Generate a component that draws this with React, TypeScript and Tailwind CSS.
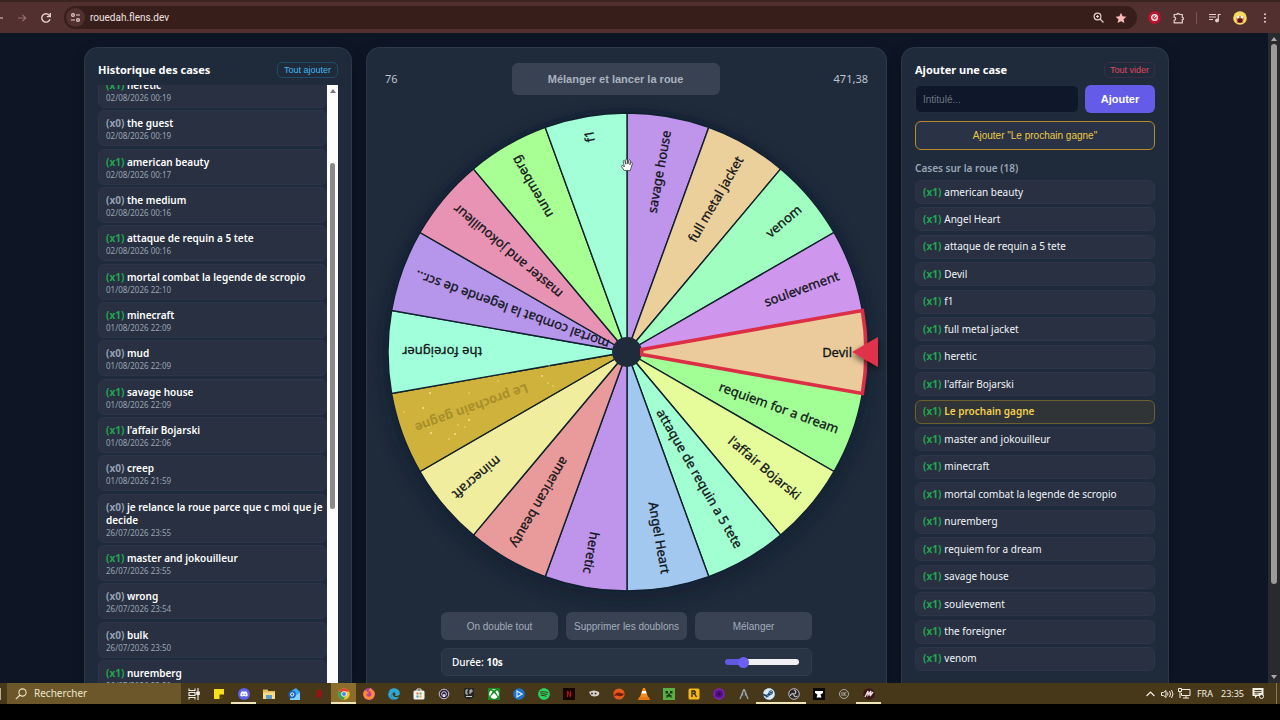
import React from "react";
import { FaDiscord, FaSpotify, FaXbox, FaFirefoxBrowser, FaEdge, FaSteam } from "react-icons/fa";

type HistoryItem = { count: number; name: string; date: string };

const HISTORY: HistoryItem[] = [
  { count: 1, name: "heretic", date: "02/08/2026 00:19" },
  { count: 0, name: "the guest", date: "02/08/2026 00:19" },
  { count: 1, name: "american beauty", date: "02/08/2026 00:17" },
  { count: 0, name: "the medium", date: "02/08/2026 00:16" },
  { count: 1, name: "attaque de requin a 5 tete", date: "02/08/2026 00:16" },
  { count: 1, name: "mortal combat la legende de scropio", date: "01/08/2026 22:10" },
  { count: 1, name: "minecraft", date: "01/08/2026 22:09" },
  { count: 0, name: "mud", date: "01/08/2026 22:09" },
  { count: 1, name: "savage house", date: "01/08/2026 22:09" },
  { count: 1, name: "l'affair Bojarski", date: "01/08/2026 22:06" },
  { count: 0, name: "creep", date: "01/08/2026 21:59" },
  { count: 0, name: "je relance la roue parce que c moi que je decide", date: "26/07/2026 23:55" },
  { count: 1, name: "master and jokouilleur", date: "26/07/2026 23:55" },
  { count: 0, name: "wrong", date: "26/07/2026 23:54" },
  { count: 0, name: "bulk", date: "26/07/2026 23:50" },
  { count: 1, name: "nuremberg", date: "26/07/2026 23:50" },
];

const ENTRIES = [
  "american beauty",
  "Angel Heart",
  "attaque de requin a 5 tete",
  "Devil",
  "f1",
  "full metal jacket",
  "heretic",
  "l'affair Bojarski",
  "Le prochain gagne",
  "master and jokouilleur",
  "minecraft",
  "mortal combat la legende de scropio",
  "nuremberg",
  "requiem for a dream",
  "savage house",
  "soulevement",
  "the foreigner",
  "venom",
];

const SPECIAL = "Le prochain gagne";

const SLICES: { label: string; color: string }[] = [
  { label: "savage house", color: "#bf94eb" },
  { label: "full metal jacket", color: "#ecd09c" },
  { label: "venom", color: "#a0ffc0" },
  { label: "soulevement", color: "#cf96ee" },
  { label: "Devil", color: "#ebcb9b" },
  { label: "requiem for a dream", color: "#a2ff96" },
  { label: "l'affair Bojarski", color: "#e6fb9a" },
  { label: "attaque de requin a 5 tete", color: "#a2ffd2" },
  { label: "Angel Heart", color: "#a2c8f0" },
  { label: "heretic", color: "#bf94eb" },
  { label: "american beauty", color: "#e99a9a" },
  { label: "minecraft", color: "#f0ee9e" },
  { label: SPECIAL, color: "#cfb23c" },
  { label: "the foreigner", color: "#a2ffdc" },
  { label: "mortal combat la legende de scr...", color: "#b696ea" },
  { label: "master and jokouilleur", color: "#e893b3" },
  { label: "nuremberg", color: "#a8ff94" },
  { label: "f1", color: "#a2ffd8" },
];

const SPARKS = [
  [61, 291], [100, 291], [129, 279], [173, 274], [179, 281], [184, 284], [62, 331], [59, 325], [80, 337], [86, 332], [89, 323], [96, 325], [54, 306], [180, 264], [35, 310], [100, 318],
];

const R = 239;

function point(angle: number, radius: number) {
  const rad = ((angle - 90) * Math.PI) / 180;
  return `${(250 + radius * Math.cos(rad)).toFixed(2)} ${(250 + radius * Math.sin(rad)).toFixed(2)}`;
}

function slicePath(i: number) {
  return `M250 250L${point(i * 20, R)}A${R} ${R} 0 0 1 ${point(i * 20 + 20, R)}Z`;
}

function Wheel() {
  return (
    <svg viewBox="0 0 500 500" className="mt-[7px] w-full max-w-[500px] shrink-0 overflow-visible" role="img" aria-label="Roue">
      <defs>
        <filter id="wheelShadow" x="-20%" y="-20%" width="140%" height="140%">
          <feGaussianBlur stdDeviation="9" />
        </filter>
        <filter id="pinShadow" x="-50%" y="-50%" width="200%" height="200%">
          <feDropShadow dx="0" dy="3" stdDeviation="3" floodColor="#000" floodOpacity="0.6" />
        </filter>
      </defs>
      <circle cx="250" cy="256" r="242" fill="#0b1322" opacity="0.5" filter="url(#wheelShadow)" />
      <circle cx="250" cy="250" r="244" fill="#172337" />
      {SLICES.map((s, i) => (
        <path key={s.label} d={slicePath(i)} fill={s.color} stroke="#10202c" strokeWidth="1.4" />
      ))}
      {SPARKS.map(([x, y], i) => (
        <circle key={i} cx={x - 8} cy={y} r={i % 3 === 0 ? 1 : 0.7} fill="#f6e08a" />
      ))}
      <circle cx="250" cy="250" r="15" fill="#1f2b3b" />
      <path d={`M${point(80, 15)}L${point(80, R)}A${R} ${R} 0 0 1 ${point(100, R)}L${point(100, 15)}Z`} fill="#ebcb9b" stroke="#dc2f45" strokeWidth="3.6" />
      {SLICES.map((s, i) => (
        <text
          key={s.label}
          x="475"
          y="250"
          textAnchor="end"
          dominantBaseline="central"
          transform={`rotate(${i * 20 - 80} 250 250)`}
          className={s.label === SPECIAL ? "text-[13px] font-bold" : "stroke-[#111418] text-[13px]"}
          strokeWidth="0.3"
          fill={s.label === SPECIAL ? "#a98f2a" : "#111418"}
        >
          {s.label}
        </text>
      ))}
      <path d="M475 250L501 235V265Z" fill="#e0324b" filter="url(#pinShadow)" />
      <g transform="translate(244 56)" fill="#fff" stroke="#222" strokeWidth="0.7" strokeLinejoin="round">
        <path d="M3.2 12.5 .6 8.7C0 7.5 1.3 6.8 2.1 7.7L3.4 9 2.2 3.6C2 2.3 3.4 2 3.8 3.2L4.9 6.3 4.7 1.9C4.7.6 6.2.6 6.4 1.9L6.8 6 7.8 2.4C8.2 1.2 9.5 1.6 9.3 2.9L8.8 6.8 10 4.8C10.7 3.8 11.8 4.4 11.4 5.6L9.9 10.2 9.2 12.7Z" />
      </g>
    </svg>
  );
}

function TopBar() {
  return (
    <header className="flex h-[33px] shrink-0 items-center border-t-2 border-[#3b2321] bg-[#52302f] pr-[13px] text-[#e5cfcc]">
      <button aria-label="Précédent" className="w-[6px] overflow-hidden">
        <svg width="5" height="12" viewBox="0 0 5 12" fill="none" stroke="currentColor"><path d="M0 6h3" /></svg>
      </button>
      <button aria-label="Suivant" className="ml-[10px] text-[#94716e]">
        <svg width="12" height="12" viewBox="0 0 12 12" fill="none" stroke="currentColor" strokeWidth="1.2"><path d="M2 6h7.5M6.5 2.8 9.7 6 6.500 9.200" /></svg>
      </button>
      <button aria-label="Actualiser" className="ml-3">
        <svg width="12" height="12" viewBox="0 0 12 12" fill="none" stroke="currentColor" strokeWidth="1.4"><path d="M10 7.200A4.200 4.200 0 1 1 9.200 3.200L10 4.200" /><path d="M10.300 1v3.600H6.700" /></svg>
      </button>
      <div className="ml-3 flex h-[23px] min-w-0 flex-1 items-center rounded-full bg-[#371e1b] pr-2.5 pl-0.5">
        <button aria-label="Informations du site" className="grid size-[19px] place-items-center rounded-full bg-[#52302f]">
          <svg width="11" height="11" viewBox="0 0 11 11" fill="none" stroke="currentColor" strokeWidth="1.2"><circle cx="3" cy="3" r="1.400" /><path d="M6 3h4M1 8h4" /><circle cx="8" cy="8" r="1.400" /></svg>
        </button>
        <span className="ml-[5px] flex-1 font-['Roboto',sans-serif] text-[10px] text-[#f0e2e0]">rouedah.flens.dev</span>
        <svg width="11" height="11" viewBox="0 0 11 11" fill="none" stroke="currentColor" strokeWidth="1.200"><circle cx="4.500" cy="4.500" r="3.400" /><path d="M7 7l3.500 3.500M3 4.500h3M4.500 3v3" /></svg>
        <svg className="ml-[11px]" width="12" height="12" viewBox="0 0 12 12" fill="#f6b9b6"><path d="M6 .8 7.600 4.300l3.800.4-2.800 2.600.8 3.800L6 9.200l-3.400 1.900.8-3.800L.6 4.700l3.800-.4Z" /></svg>
      </div>
      <svg className="ml-[11px]" width="13" height="13" viewBox="0 0 13 13"><circle cx="6.500" cy="6.500" r="6.300" fill="#c4122d" /><circle cx="6.500" cy="6.500" r="2.900" fill="#e24358" stroke="#fff" strokeWidth="1.200" /><path d="M6 7 8 5" stroke="#fff" /></svg>
      <svg className="ml-3" width="12" height="12" viewBox="0 0 12 12" fill="none" stroke="currentColor" strokeWidth="1.200"><path d="M1.200 2.500h2.700a1.200 1.200 0 0 1 2.400 0h3v2.800a1.200 1.200 0 0 1 0 2.400v3.100H1.200V8.200a1.500 1.500 0 0 0 0-3Z" /></svg>
      <span className="ml-[11px] h-3 w-px bg-[#785350]" />
      <svg className="ml-3" width="12" height="10" viewBox="0 0 12 10" fill="none" stroke="currentColor" strokeWidth="1.200"><path d="M0 1.500h7M0 4h7M0 6.500h4M9.300 7.500v-6h2.500" /><circle cx="8" cy="7.500" r="1.300" fill="currentColor" /></svg>
      <svg className="ml-3" width="14" height="14" viewBox="0 0 14 14"><circle cx="7" cy="7" r="6.800" fill="#f4dc62" /><path d="M3 7Q7 3 11 7L10 12H4Z" fill="#dc7a5c" /><ellipse cx="7" cy="9.500" rx="2.600" ry="2.200" fill="#5c1218" /><circle cx="5" cy="6" r="1.200" fill="#fff" /><circle cx="9" cy="6" r="1.200" fill="#fff" /></svg>
      <button aria-label="Menu" className="ml-4">
        <svg width="4" height="10" viewBox="0 0 4 10" fill="currentColor"><circle cx="2" cy="1.300" r="1" /><circle cx="2" cy="5" r="1" /><circle cx="2" cy="8.700" r="1" /></svg>
      </button>
    </header>
  );
}

function Panel({ children, className }: { children: React.ReactNode; className: string }) {
  return (
    <section className={`flex min-w-0 flex-col overflow-hidden rounded-t-[14px] border border-b-0 border-[#2b394a] bg-[#1f2b3b] shadow-[0_4px_12px_rgba(0,0,0,0.35)] ${className}`}>
      {children}
    </section>
  );
}

function Count({ n }: { n: number }) {
  return <span className={n > 0 ? "font-bold text-[#22a652]" : "font-bold text-[#94a0b2]"}>(x{n})</span>;
}

function HistoryPanel() {
  return (
    <Panel className="px-[13px] pt-3.5">
      <div className="flex h-4 shrink-0 items-center justify-between">
        <h2 className="text-[11px] font-bold text-white">Historique des cases</h2>
        <button className="h-4 rounded-[5px] border border-[#1d4d66] px-1.5 font-['Liberation_Sans',sans-serif] text-[9px] leading-none text-[#3fb8ee]">Tout ajouter</button>
      </div>
      <div className="mt-[7px] flex min-h-0 flex-1">
        <div className="min-w-0 flex-1 overflow-hidden">
          <ul className="-mt-[13px] flex h-[624px] flex-col justify-between">
            {HISTORY.map((h) => (
              <li key={h.name} className="shrink-0 rounded-md border border-[#2b3648] bg-[#283041] pt-1.5 pr-px pb-1 pl-[7px]">
                <p className="text-[10px] leading-[13px] font-semibold text-white"><Count n={h.count} /> {h.name}</p>
                <p className="text-[8px] leading-[11px] text-[#9aa5b5]">{h.date}</p>
              </li>
            ))}
          </ul>
        </div>
        <div className="flex w-[11px] flex-col items-center bg-[#fdfdfd] pt-1">
          <svg width="6" height="4" viewBox="0 0 6 4" fill="#777"><path d="M3 0 6 4H0Z" /></svg>
          <span className="mt-[70px] h-[346px] w-[5px] rounded-full bg-[#8a8a8a]" />
        </div>
      </div>
    </Panel>
  );
}

function WheelPanel() {
  const action = "h-7 rounded-md bg-[#384253] font-['Liberation_Sans',sans-serif] text-[10px] text-[#a3adba]";
  return (
    <Panel className="items-center px-2 pt-[15px]">
      <div className="flex w-full shrink-0 items-center justify-between px-2.5 text-[11px] text-[#bcc5d1]">
        <span>76</span>
        <button className="h-8 w-52 rounded-md bg-[#384253] font-['Liberation_Sans',sans-serif] text-[11px] font-bold text-[#a9b2bf]">Mélanger et lancer la roue</button>
        <span className="text-right">471,38</span>
      </div>
      <Wheel />
      <div className="mt-2.5 grid w-full max-w-[371px] shrink-0 grid-cols-[117fr_121fr_117fr] gap-2">
        <button className={action}>On double tout</button>
        <button className={action}>Supprimer les doublons</button>
        <button className={action}>Mélanger</button>
      </div>
      <div className="mt-2 flex h-7 w-full max-w-[371px] shrink-0 items-center justify-between rounded-md border border-[#303b4c] bg-[#283344] px-2.5 text-[10px] text-white">
        <label htmlFor="duration" className="font-medium">Durée: <strong>10s</strong></label>
        <input
          id="duration"
          type="range"
          min={0}
          max={100}
          defaultValue={20}
          className="mr-0.5 h-[6px] w-[74px] appearance-none rounded-full bg-[linear-gradient(to_right,#6058e0_24%,#f1f1f4_24%)] [&::-webkit-slider-thumb]:size-[11px] [&::-webkit-slider-thumb]:appearance-none [&::-webkit-slider-thumb]:rounded-full [&::-webkit-slider-thumb]:bg-[#6a5ff0]"
        />
      </div>
    </Panel>
  );
}

function EntriesPanel() {
  return (
    <Panel className="px-[13px] pt-3.5">
      <div className="flex h-4 shrink-0 items-center justify-between">
        <h2 className="text-[11px] font-bold text-white">Ajouter une case</h2>
        <button className="h-4 rounded-[5px] border border-[#3a2e41] px-[5px] font-['Liberation_Sans',sans-serif] text-[9px] leading-none text-[#e0485f]">Tout vider</button>
      </div>
      <div className="mt-[7px] flex h-7 shrink-0 gap-1.5">
        <input aria-label="Intitulé" placeholder="Intitulé..." className="min-w-0 flex-1 rounded-md border border-[#222e40] bg-[#0f172a] px-[7px] font-['Liberation_Sans',sans-serif] text-[10px] text-white placeholder:text-[#6b7483]" />
        <button className="w-[70px] rounded-md bg-[#645be8] font-['Liberation_Sans',sans-serif] text-[11px] font-bold text-white">Ajouter</button>
      </div>
      <button className="mt-2 h-[29px] shrink-0 rounded-md border border-[#b98a2c] bg-[#293345] font-['Liberation_Sans',sans-serif] text-[10px] text-[#ecc944]">Ajouter "Le prochain gagne"</button>
      <h3 className="mt-[11px] text-[10px] leading-[14px] font-semibold text-[#9aa6b7]">Cases sur la roue (18)</h3>
      <ul className="mt-[5px] flex h-[491px] shrink-0 flex-col justify-between">
        {ENTRIES.map((name) => (
          <li
            key={name}
            className={
              name === SPECIAL
                ? "flex h-6 items-center gap-[3px] rounded-md border border-[#6b602f] bg-[#303437] px-[7px] text-[10px] font-semibold text-[#f2cf4c]"
                : "flex h-6 items-center gap-[3px] rounded-md border border-[#2b3648] bg-[#283041] px-[7px] text-[10px] text-[#f1f4f8]"
            }
          >
            <Count n={1} />
            <span>{name}</span>
          </li>
        ))}
      </ul>
    </Panel>
  );
}

const svgProps = { width: 12, height: 12, viewBox: "0 0 12 12" };

const APPS: { name: string; icon: React.ReactNode; open?: boolean; active?: boolean }[] = [
  { name: "Affichage des tâches", icon: <svg {...svgProps} fill="none" stroke="#eee" strokeWidth="1.100"><path d="M1 .5v2h6v-2M1 11.500v-2h6v2M1 4.500h6v3H1ZM10 0v12" /><path d="M8.800 4h2.400v2.500H8.800Z" fill="#eee" /></svg> },
  { name: "Pense-bête", icon: <svg {...svgProps}><path d="M1 1h10v6L7.500 11H1Z" fill="#f6e21c" /><path d="M6.500 6.500H11v3H8.500V11h-2Z" fill="#4a3d08" /></svg> },
  { name: "Discord", open: true, icon: <span className="grid size-3 place-items-center rounded-full bg-[#5b63e8]"><FaDiscord size={8} color="#fff" /></span> },
  { name: "Explorateur", icon: <svg {...svgProps}><path d="M0 1.500h4.500l1 1.500H12v8H0Z" fill="#e2bd5c" /><path d="M0 4.500h12V11H0Z" fill="#f7dc87" /><path d="M3 7h6v4H3Z" fill="#5c9bc8" /></svg> },
  { name: "Outlook", icon: <svg {...svgProps}><path d="M3 3 8 0l4 4v7H2Z" fill="#3eaaf0" /><path d="M2 11l10-6v7H2Z" fill="#84d2ff" /><circle cx="4.200" cy="6.500" r="3.700" fill="#1763bd" /><circle cx="4.200" cy="6.500" r="1.600" fill="none" stroke="#fff" /></svg> },
  { name: "Jeu", icon: <svg {...svgProps}><path d="M4 2h4.500v8L6 9 3.500 10Z" fill="#a30e16" /></svg> },
  { name: "Chrome", open: true, active: true, icon: <svg {...svgProps}><circle cx="6" cy="6" r="5.800" fill="#f4c430" /><path d="M6 6 1 3A5.800 5.800 0 0 1 11.200 3.500H6Z" fill="#df4335" /><path d="M6 6 1 3A5.800 5.800 0 0 0 5.500 11.800L8.200 7Z" fill="#35a34f" /><circle cx="6" cy="6" r="2.700" fill="#fff" /><circle cx="6" cy="6" r="2" fill="#4285f4" /></svg> },
  { name: "Firefox", icon: <span className="grid size-3 place-items-center rounded-full bg-[#b43fa0]"><FaFirefoxBrowser size={12} color="#ff8a32" /></span> },
  { name: "Edge", icon: <FaEdge size={12} color="#2ba7d8" /> },
  { name: "Store", icon: <svg {...svgProps}><path d="M4 3V1h4v2" fill="none" stroke="#ddd" /><rect x=".5" y="2.500" width="11" height="9" rx="1.500" fill="#f4f4f4" /><path d="M3.500 4.500h2v2h-2Z" fill="#e66b45" /><path d="M6.500 4.500h2v2h-2Z" fill="#78a83b" /><path d="M3.500 7.500h2v2h-2Z" fill="#3a98cf" /><path d="M6.500 7.500h2v2h-2Z" fill="#deb13d" /></svg> },
  { name: "Podcasts", icon: <svg {...svgProps}><circle cx="6" cy="6" r="4.800" fill="#29233b" stroke="#c9c2da" /><circle cx="6" cy="6" r="2.400" fill="none" stroke="#c9c2da" /><path d="M6 6v3" stroke="#fff" strokeWidth="1.400" /></svg> },
  { name: "Epic Games", icon: <svg {...svgProps} fill="none"><path d="M1 0h10v9l-5 3-5-3Z" fill="#252525" /><path d="M5 2H3v4h2M3 4h1.500M7 6V2h2v2H7M3 8.500h6" stroke="#ddd" strokeWidth=".9" /></svg> },
  { name: "Xbox", icon: <span className="grid size-3 place-items-center bg-[#178a22]"><FaXbox size={10} color="#fff" /></span> },
  { name: "Battle.net", icon: <svg {...svgProps}><circle cx="6" cy="6" r="5.800" fill="#1d73c8" /><path d="M4 3v6l5-3Z" fill="none" stroke="#d9f0ff" strokeWidth="1.200" /></svg> },
  { name: "Spotify", icon: <FaSpotify size={12} color="#24d765" /> },
  { name: "Netflix", icon: <svg {...svgProps}><path d="M0 0h12v12H0Z" fill="#180303" /><path d="M4.500 9v-6l3 6v-6" fill="none" stroke="#b4101a" strokeWidth="1.100" /></svg> },
  { name: "Manette", icon: <svg {...svgProps}><path d="M1 4q5-3 10 0 1 3-2 4-3 1-6-.5Z" fill="#d7d2c9" /><circle cx="4" cy="5.500" r="1" fill="#333" /><circle cx="7.500" cy="5.500" r="1" fill="#333" /></svg> },
  { name: "Studio", icon: <svg {...svgProps}><circle cx="6" cy="6" r="5.600" fill="#e85a1b" /><path d="M1 8Q3 3 8 5q2 1 3 0-1 4-5 3-3-1-5 0" fill="#751b0c" /></svg> },
  { name: "VLC", icon: <svg {...svgProps}><path d="M5 0h2l3 9H2Z" fill="#f68b1f" /><path d="M4.200 3h3.600l.8 2.500H3.400Z" fill="#fff" /><path d="M1 9h10l1 3H0Z" fill="#e87912" /></svg> },
  { name: "Minecraft", icon: <svg {...svgProps}><path d="M0 0h12v12H0Z" fill="#58b044" /><path d="M2.500 3h2.500v2.500H2.500ZM7 3h2.500v2.500H7ZM5 5.500h2V7h1.500v3H7.500V8.800H4.500V10h-1V7H5Z" fill="#173715" /></svg> },
  { name: "Rockstar", icon: <svg {...svgProps}><rect x=".5" y=".5" width="11" height="11" rx="1.500" fill="#f6b817" /><path d="M4 9V3h2.500q1.500 1.200 0 2.500H5M6.500 5.500 8.500 9" fill="none" stroke="#222" strokeWidth="1.300" /></svg> },
  { name: "Tor", icon: <svg {...svgProps}><circle cx="6" cy="6" r="4.900" fill="#541087" stroke="#8321bd" strokeWidth="1.600" /><circle cx="6" cy="6" r="1.800" fill="#32104f" /></svg> },
  { name: "Compas", icon: <svg {...svgProps} fill="none" stroke="#95a7b7" strokeWidth="1.300"><path d="M6 1 2 11M6 1l4 10M4.500 3.500v4M7.500 3.500v4" /></svg> },
  { name: "Steam", open: true, icon: <span className="grid size-3 place-items-center rounded-full bg-[#1d4a75]"><FaSteam size={12} color="#dceaf5" /></span> },
  { name: "OBS", open: true, icon: <svg {...svgProps} fill="none" stroke="#bbb"><circle cx="6" cy="6" r="5.300" fill="#292529" /><path d="M6 2q3 1 1 4M9.500 8q-3 2-4-2M2.500 8q0-3 4-2" strokeWidth="1.300" /></svg> },
  { name: "Enclume", icon: <svg {...svgProps}><path d="M0 0h12v12H0Z" fill="#090909" /><path d="M2 3h8v2L7.500 6.500l1 3H3.500l1-3L2 5Z" fill="#fff" /></svg> },
  { name: "Musique", icon: <svg {...svgProps} fill="none" stroke="#aaa"><circle cx="6" cy="6" r="4.500" /><path d="M4 4v4M6 4v4M8.500 4 6 6l2.500 2" /></svg> },
  { name: "Wallpaper", open: true, icon: <svg {...svgProps}><circle cx="6" cy="6" r="5.800" fill="#3a1519" /><path d="M2 9 5 3v4l3-4-1 5 3-4" fill="none" stroke="#f2dfe1" strokeWidth="1.300" /></svg> },
];

function TaskBar() {
  return (
    <footer className="flex h-[21px] shrink-0 items-center bg-[#48381a] text-[9px] text-[#f4efe2]">
      <span className="h-3 w-px bg-[#b9ad8b]" />
      <label className="ml-1.5 flex h-full w-[174px] items-center bg-[#6b5729] pl-2">
        <svg width="12" height="12" viewBox="0 0 12 12" fill="none" stroke="#eee4c8" strokeWidth="1.100"><circle cx="7.500" cy="4.500" r="3.600" /><path d="M5 7 .8 11.200" /></svg>
        <input aria-label="Rechercher" placeholder="Rechercher" className="ml-[7px] w-[120px] bg-transparent text-[10px] outline-none placeholder:text-[#eee5cd]" />
      </label>
      <nav className="flex h-full flex-1">
        {APPS.map((app) => (
          <button
            key={app.name}
            aria-label={app.name}
            className={`grid w-[25px] shrink-0 place-items-center border-y-2 border-t-transparent ${app.active ? "bg-[#8b6e2c]" : ""} ${app.open ? "border-b-[#efe3b9]" : "border-b-transparent"}`}
          >
            {app.icon}
          </button>
        ))}
      </nav>
      <svg width="9" height="6" viewBox="0 0 9 6" fill="none" stroke="currentColor" strokeWidth="1.200"><path d="M.6 5 4.500 1l3.900 4" /></svg>
      <svg className="ml-1.5" width="13" height="10" viewBox="0 0 13 10" fill="none" stroke="currentColor"><path d="M.5 3.500h2l2.500-2v7l-2.500-2h-2ZM6.500 3.500q1 1.500 0 3M8.500 2q2 3 0 6M10.500 1q3 4 0 8" /></svg>
      <svg className="ml-1" width="13" height="11" viewBox="0 0 13 11" fill="none" stroke="currentColor"><path d="M4 1.500h8v6H3.500V5M8 7.500v2.500M5 10h6M.5.5h3v3h-3ZM2 4v6" /></svg>
      <span className="ml-1.5">FRA</span>
      <span className="ml-2">23:35</span>
      <svg className="ml-2" width="12" height="11" viewBox="0 0 12 11"><path d="M.5 0h11v8H5L3 10.500V8H.5Z" fill="#f5f1e6" /><path d="M2.500 2.500h7M2.500 4.300h7M2.500 6h4" stroke="#48381a" /><circle cx="9.500" cy="8.500" r="2" fill="#48381a" stroke="#f5f1e6" /></svg>
      <span className="mr-[3px] ml-3 h-full w-px bg-[#897953]" />
    </footer>
  );
}

export default function App() {
  return (
    <div className="flex h-screen flex-col overflow-hidden bg-black font-['Noto_Sans','Open_Sans',sans-serif]">
      <TopBar />
      <div className="flex min-h-0 flex-1 bg-[#0e1626]">
        <main className="grid min-w-0 flex-1 grid-cols-[268px_minmax(0,1fr)_268px] gap-[14px] pt-3.5 pr-[99px] pl-[84px]">
          <HistoryPanel />
          <WheelPanel />
          <EntriesPanel />
        </main>
        <div className="flex w-[12px] flex-col items-center bg-[#292a2d] pt-1 pb-1">
          <svg width="6" height="4" viewBox="0 0 6 4" fill="#aaa"><path d="M3 0 6 4H0Z" /></svg>
          <span className="mt-[3px] h-[540px] w-1.5 rounded-full bg-[#9b9b9b]" />
          <svg className="mt-auto" width="6" height="4" viewBox="0 0 6 4" fill="#aaa"><path d="M3 4 6 0H0Z" /></svg>
        </div>
      </div>
      <TaskBar />
      <div className="h-4 shrink-0 bg-black" />
    </div>
  );
}
